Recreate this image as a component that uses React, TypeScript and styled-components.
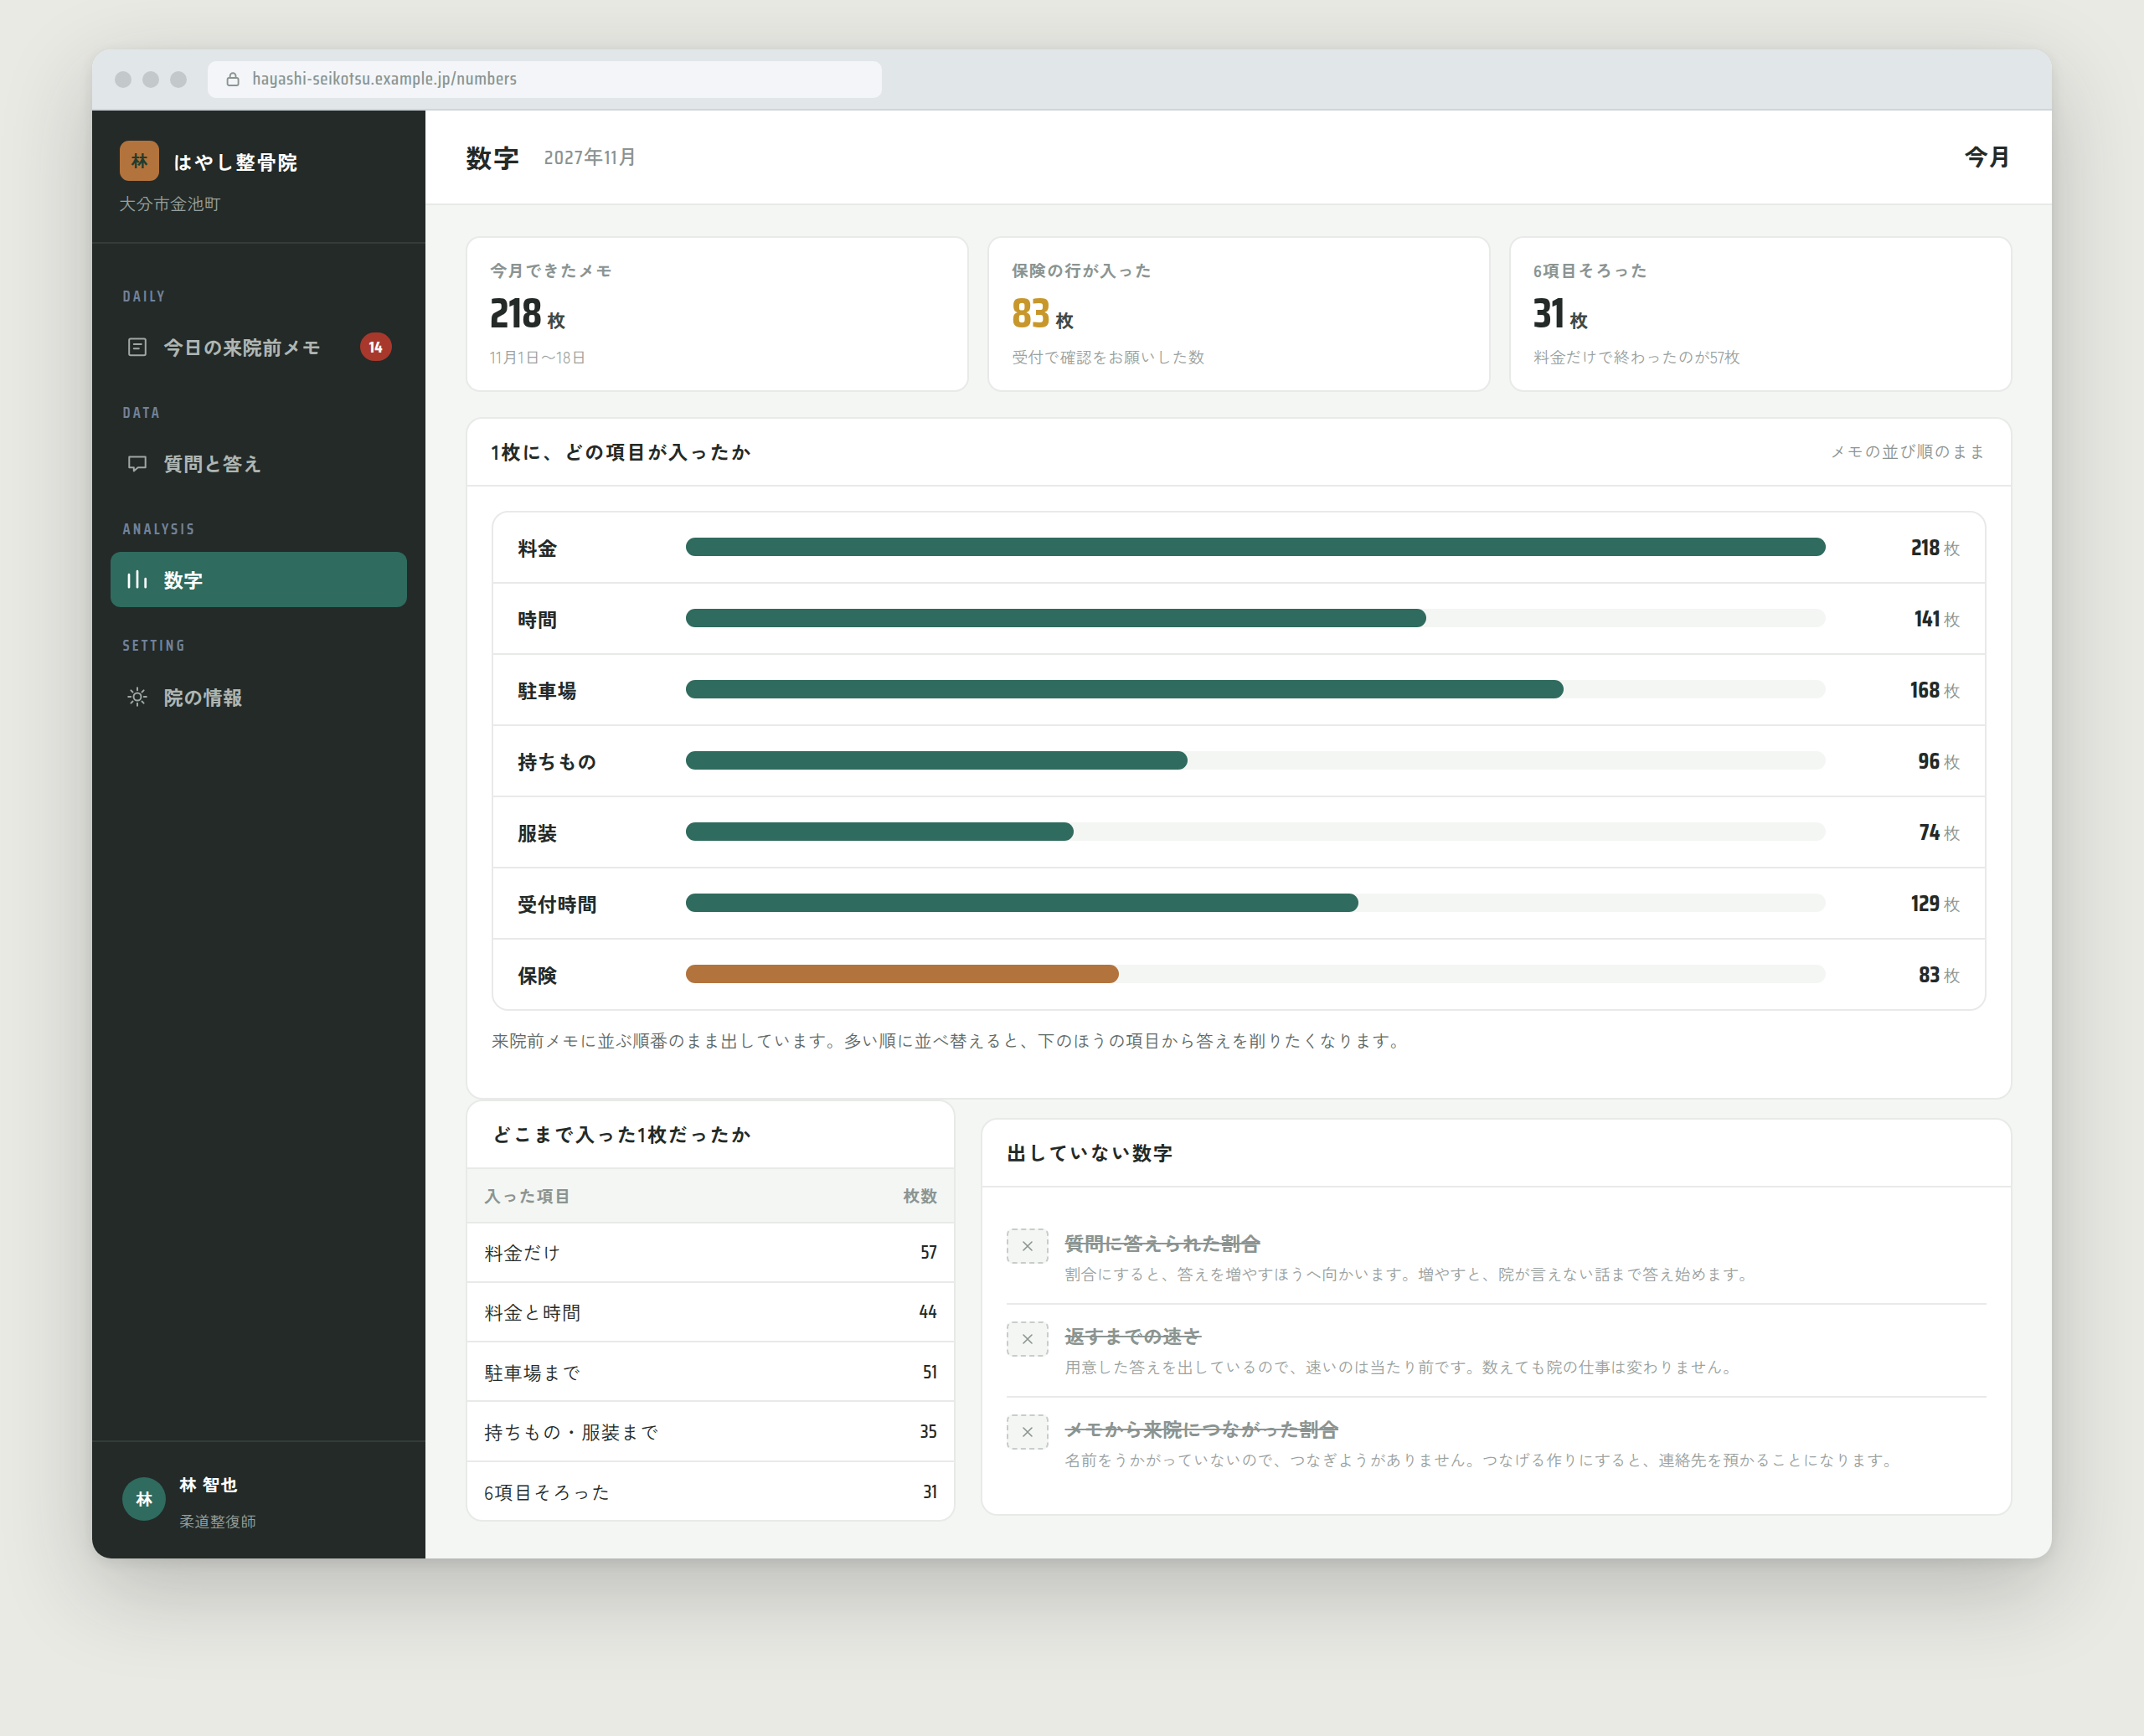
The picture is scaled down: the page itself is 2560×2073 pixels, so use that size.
import React from 'react';
import styled, { createGlobalStyle } from 'styled-components';

const jp = '"Zen Kaku Gothic New", "Noto Sans CJK JP", sans-serif';
const num = '"Saira Condensed", "Roboto Condensed", "Zen Kaku Gothic New", "Noto Sans CJK JP", sans-serif';

const c = {
  ink: '#232a28',
  green: '#2f6b5e',
  copper: '#b3733c',
  gold: '#c8972b',
  red: '#a8382c',
  line: '#e8eae8',
  ground: '#f4f6f4',
  mute: '#8b9491',
  faint: '#9aa19e',
};

const Global = createGlobalStyle`
  *, *::before, *::after { box-sizing: border-box; }
  body { margin: 0; background: #e9eae4; font-family: ${jp}; color: ${c.ink}; }
  h1, h2, p, ul { margin: 0; padding: 0; }
`;

const Page = styled.div`
  height: 2073px;
  padding: 59px 110px 0;
  overflow: hidden;
`;

const Window = styled.div`
  height: 1802px;
  display: flex;
  flex-direction: column;
  border-radius: 23px;
  overflow: hidden;
  background: ${c.ground};
  box-shadow: 0 36px 108px rgba(32, 33, 36, 0.24), 0 4px 16px rgba(32, 35, 36, 0.1);
`;

const Chrome = styled.div`
  flex: none;
  height: 73px;
  display: flex;
  align-items: center;
  padding: 0 27px;
  background: #e1e6e9;
  border-bottom: 2px solid #cfd5d8;
`;

const Dots = styled.div`
  display: flex;
  gap: 13px;
  margin-right: 25px;
`;

const Dot = styled.span`
  width: 20px;
  height: 20px;
  border-radius: 50%;
  background: #c3c8cb;
`;

const Address = styled.div`
  width: 805px;
  height: 44px;
  display: flex;
  align-items: center;
  gap: 14.5px;
  padding-left: 22px;
  border-radius: 10px;
  background: #f3f5f8;
  color: ${c.mute};
  font: 500 21.67px/42px ${num};
  letter-spacing: 0.64px;
`;

const Url = styled.span`
  padding-bottom: 2px;
`;

const Body = styled.div`
  flex: 1;
  min-height: 0;
  display: flex;
`;

const Sidebar = styled.aside`
  width: 398px;
  flex: none;
  display: flex;
  flex-direction: column;
  background: ${c.ink};
`;

const Brand = styled.div`
  height: 159px;
  padding: 36px 32.5px 0;
  border-bottom: 2px solid #343c3a;
`;

const BrandRow = styled.div`
  display: flex;
  align-items: center;
  gap: 16.5px;
`;

const BrandMark = styled.span`
  width: 47.5px;
  height: 48px;
  display: grid;
  place-items: center;
  border-radius: 11px;
  background: ${c.copper};
  color: #1f3d30;
  font: 700 20px/24px ${jp};
`;

const BrandName = styled.span`
  padding-top: 2px;
  color: #fff;
  font: 700 23.33px/30px ${jp};
  letter-spacing: 1.65px;
`;

const BrandPlace = styled.p`
  margin-top: 13px;
  color: #98a19e;
  font: 400 20px/28px ${jp};
  letter-spacing: 0.25px;
`;

const Nav = styled.nav`
  flex: 1;
  padding: 48.5px 22px 0;
`;

const NavLabel = styled.p`
  height: 27px;
  margin-bottom: 14.5px;
  padding-left: 14.5px;
  color: #72829a;
  font: 600 18.33px/27px ${num};
  letter-spacing: 3.2px;
`;

const NavItem = styled.div<{ $active?: boolean }>`
  height: 66px;
  margin-bottom: 31.7px;
  display: flex;
  align-items: center;
  padding: 0 18px;
  border-radius: 12px;
  background: ${(p) => (p.$active ? c.green : 'transparent')};
  color: ${(p) => (p.$active ? '#fff' : '#aeb6b3')};
  font: 700 23.33px/34px ${jp};
  letter-spacing: 0.2px;

  svg {
    margin-right: 17.5px;
    opacity: ${(p) => (p.$active ? 1 : 0.9)};
  }
`;

const Badge = styled.span`
  height: 34px;
  width: 38.5px;
  margin-left: auto;
  border-radius: 17px;
  background: ${c.red};
  color: #fff;
  text-align: center;
  font: 700 20px/34px ${num};
`;

const Account = styled.div`
  height: 141px;
  display: flex;
  gap: 16px;
  padding: 42px 36px 0;
  border-top: 2px solid #343c3a;
`;

const Avatar = styled.span`
  width: 52px;
  height: 52px;
  display: grid;
  place-items: center;
  border-radius: 50%;
  background: ${c.green};
  color: #fff;
  font: 700 20px/26px ${jp};
`;

const Person = styled.div`
  margin-top: -6px;
`;

const PersonName = styled.p`
  color: #fff;
  font: 700 20.83px/28px ${jp};
  letter-spacing: 0.6px;
`;

const PersonRole = styled.p`
  margin-top: 16.5px;
  color: #98a19e;
  font: 400 18.33px/26px ${jp};
`;

const Main = styled.main`
  flex: 1;
  min-width: 0;
`;

const TopBar = styled.header`
  height: 113px;
  display: flex;
  align-items: center;
  padding: 0 47.5px 0 48px;
  background: #fff;
  border-bottom: 2px solid ${c.line};
`;

const PageTitle = styled.h1`
  font: 700 31.2px/40px ${jp};
  letter-spacing: 1.6px;
`;

const Period = styled.span`
  margin-left: 28.5px;
  color: ${c.mute};
  font: 500 23.33px/30px ${num};
  letter-spacing: 1.4px;
`;

const Scope = styled.span`
  margin-left: auto;
  padding-bottom: 3px;
  font: 700 27.8px/36px ${jp};
  letter-spacing: 0.6px;
`;

const Content = styled.div`
  padding: 37px 47.5px 0 48px;
`;

const Cards = styled.div`
  display: grid;
  grid-template-columns: repeat(3, 1fr);
  gap: 22.5px;
`;

const Card = styled.section`
  height: 186px;
  padding: 25px 27px 0;
  border: 2px solid ${c.line};
  border-radius: 17px;
  background: #fff;
`;

const CardLabel = styled.p`
  color: ${c.mute};
  font: 700 20px/28px ${jp};
  letter-spacing: 1px;
`;

const CardValue = styled.p<{ $tone: string }>`
  height: 50px;
  margin: 12px 0 13px;
  color: ${(p) => p.$tone};
  font: 700 50px/50px ${num};
`;

const CardUnit = styled.span`
  margin-left: 6px;
  color: #3f4a46;
  font: 700 22px/30px ${jp};
`;

const CardNote = styled.p`
  color: ${c.faint};
  font: 400 19.17px/28px ${jp};
`;

const Panel = styled.section`
  border: 2px solid ${c.line};
  border-radius: 20px;
  background: #fff;
  overflow: hidden;
`;

const FieldPanel = styled(Panel)`
  height: 815px;
  margin-top: 30px;
`;

const PanelHead = styled.header`
  height: 81px;
  display: flex;
  align-items: center;
  justify-content: space-between;
  padding: 0 29px 2px;
  border-bottom: 2px solid ${c.line};
`;

const PanelTitle = styled.h2`
  font: 700 23.33px/34px ${jp};
  letter-spacing: 1.63px;
`;

const PanelNote = styled.span`
  color: ${c.mute};
  font: 400 20px/28px ${jp};
  letter-spacing: 0.75px;
`;

const PanelBody = styled.div`
  padding: 28.5px 29px;
`;

const Bars = styled.ul`
  list-style: none;
  border: 2px solid ${c.line};
  border-radius: 20px;
`;

const BarRow = styled.li`
  height: 85.1px;
  display: grid;
  grid-template-columns: 201px 1360.5px 1fr;
  align-items: center;
  padding: 0 29px;
  border-bottom: 2px solid ${c.line};

  &:last-child { height: 83.1px; border-bottom: 0; }
`;

const BarName = styled.span`
  padding-top: 1.5px;
  font: 700 23.33px/34px ${jp};
  letter-spacing: 0.4px;
`;

const Track = styled.span`
  height: 22px;
  margin-top: -1px;
  border-radius: 11px;
  background: ${c.ground};
`;

const Fill = styled.span<{ $color: string }>`
  display: block;
  height: 22px;
  border-radius: 11px;
  background: ${(p) => p.$color};
`;

const BarValue = styled.span`
  padding-top: 1.5px;
  text-align: right;
  font: 700 27px/34px ${num};
  letter-spacing: 0.2px;
`;

const BarUnit = styled.span`
  margin-left: 4px;
  color: ${c.mute};
  font: 400 20px/28px ${jp};
  letter-spacing: 0;
`;

const Footnote = styled.p`
  margin-top: 19px;
  color: #606966;
  font: 400 20.83px/32px ${jp};
  letter-spacing: 0.2px;
`;

const Lower = styled.div`
  display: flex;
  align-items: flex-start;
  gap: 30px;
`;

const DepthPanel = styled(Panel)`
  width: 585px;
  height: 504px;
  flex: none;
`;

const AbsentPanel = styled(Panel)`
  flex: 1;
  height: 475px;
  margin-top: 22px;
`;

const TableHead = styled.div`
  height: 64.5px;
  display: flex;
  align-items: center;
  justify-content: space-between;
  padding: 2px 19px 0 20px;
  border-bottom: 2px solid ${c.line};
  background: ${c.ground};
  color: ${c.mute};
  font: 700 20px/28px ${jp};
  letter-spacing: 0.9px;
`;

const TableRow = styled.div`
  height: 71.25px;
  display: flex;
  align-items: center;
  justify-content: space-between;
  padding: 0 20px;
  border-bottom: 2px solid ${c.line};
  font: 400 22.5px/34px ${jp};
  letter-spacing: 0.78px;

  &:last-child { border-bottom: 0; }
`;

const TableCount = styled.span`
  font: 500 22.5px/34px ${num};
  letter-spacing: 0.2px;
`;

const Absent = styled.ul`
  list-style: none;
  padding: 28.5px 29px 0;
`;

const AbsentRow = styled.li`
  height: 111.4px;
  display: flex;
  gap: 20px;
  padding-top: 20px;
  border-bottom: 2px solid ${c.line};

  &:last-child { border-bottom: 0; }
`;

const Cross = styled.span`
  width: 49.5px;
  height: 42px;
  flex: none;
  display: grid;
  place-items: center;
  border: 2px dashed #c8cdca;
  border-radius: 7px;
  background: ${c.ground};
  color: ${c.mute};
`;

const AbsentTitle = styled.p`
  color: ${c.mute};
  font: 700 23.33px/34px ${jp};
  text-decoration: line-through;
`;

const AbsentNote = styled.p`
  margin-top: 5px;
  color: ${c.faint};
  font: 400 19.17px/30px ${jp};
`;

const Glyph = ({ size = 28, width = 2, children }: { size?: number; width?: number; children: React.ReactNode }) => (
  <svg width={size} height={size} viewBox={`0 0 ${size} ${size}`} fill="none" stroke="currentColor"
    strokeWidth={width} strokeLinecap="round" strokeLinejoin="round">{children}</svg>
);

const MemoIcon = () => (
  <Glyph><rect x="4.2" y="4.4" width="19.6" height="19.8" rx="1.6" /><path d="M9.8 10.9h9M9.8 16.2h6" /></Glyph>
);
const TalkIcon = () => (
  <Glyph><path d="M4.3 6.6h19.4v12.6h-9l-4.9 4.2v-4.2H4.3z" /></Glyph>
);
const BarsIcon = () => (
  <Glyph width={2.7}><path d="M4 8.2v15M14 4.2v19M23.7 13.2v10" /></Glyph>
);
const SunIcon = () => (
  <Glyph>
    <circle cx="14" cy="14" r="4.5" />
    <path d="M14 3.2v3M14 21.8v3M3.2 14h3M21.8 14h3M6.4 6.4l2.1 2.1M19.5 19.5l2.1 2.1M6.4 21.6l2.1-2.1M19.5 8.5l2.1-2.1" />
  </Glyph>
);
const LockIcon = () => (
  <Glyph size={17} width={1.9}><rect x="1.6" y="7" width="13" height="9" rx="2" /><path d="M4.7 7V4.6a3.4 3.4 0 0 1 6.8 0V7" /></Glyph>
);
const CrossIcon = () => (
  <Glyph size={12} width={1.6}><path d="M1 1l10 10M11 1L1 11" /></Glyph>
);

const nav = [
  { label: 'DAILY', name: '今日の来院前メモ', icon: <MemoIcon />, badge: 14 },
  { label: 'DATA', name: '質問と答え', icon: <TalkIcon /> },
  { label: 'ANALYSIS', name: '数字', icon: <BarsIcon />, active: true },
  { label: 'SETTING', name: '院の情報', icon: <SunIcon /> },
];

const cards = [
  { label: '今月できたメモ', value: 218, note: '11月1日〜18日', tone: c.ink },
  { label: '保険の行が入った', value: 83, note: '受付で確認をお願いした数', tone: c.gold },
  { label: '6項目そろった', value: 31, note: '料金だけで終わったのが57枚', tone: c.ink },
];

const fields = [
  { name: '料金', count: 218, color: c.green },
  { name: '時間', count: 141, color: c.green },
  { name: '駐車場', count: 168, color: c.green },
  { name: '持ちもの', count: 96, color: c.green },
  { name: '服装', count: 74, color: c.green },
  { name: '受付時間', count: 129, color: c.green },
  { name: '保険', count: 83, color: c.copper },
];

const depth: [string, number][] = [
  ['料金だけ', 57],
  ['料金と時間', 44],
  ['駐車場まで', 51],
  ['持ちもの・服装まで', 35],
  ['6項目そろった', 31],
];

const absent = [
  ['質問に答えられた割合', '割合にすると、答えを増やすほうへ向かいます。増やすと、院が言えない話まで答え始めます。'],
  ['返すまでの速さ', '用意した答えを出しているので、速いのは当たり前です。数えても院の仕事は変わりません。'],
  ['メモから来院につながった割合', '名前をうかがっていないので、つなぎようがありません。つなげる作りにすると、連絡先を預かることになります。'],
];

export default function App() {
  return (
    <Page>
      <Global />
      <Window>
        <Chrome>
          <Dots><Dot /><Dot /><Dot /></Dots>
          <Address><LockIcon /><Url>hayashi-seikotsu.example.jp/numbers</Url></Address>
        </Chrome>
        <Body>
          <Sidebar>
            <Brand>
              <BrandRow><BrandMark>林</BrandMark><BrandName>はやし整骨院</BrandName></BrandRow>
              <BrandPlace>大分市金池町</BrandPlace>
            </Brand>
            <Nav>
              {nav.map((n) => (
                <React.Fragment key={n.label}>
                  <NavLabel>{n.label}</NavLabel>
                  <NavItem $active={n.active}>
                    {n.icon}
                    <span>{n.name}</span>
                    {n.badge && <Badge>{n.badge}</Badge>}
                  </NavItem>
                </React.Fragment>
              ))}
            </Nav>
            <Account>
              <Avatar>林</Avatar>
              <Person><PersonName>林 智也</PersonName><PersonRole>柔道整復師</PersonRole></Person>
            </Account>
          </Sidebar>
          <Main>
            <TopBar>
              <PageTitle>数字</PageTitle>
              <Period>2027年11月</Period>
              <Scope>今月</Scope>
            </TopBar>
            <Content>
              <Cards>
                {cards.map((k) => (
                  <Card key={k.label}>
                    <CardLabel>{k.label}</CardLabel>
                    <CardValue $tone={k.tone}>{k.value}<CardUnit>枚</CardUnit></CardValue>
                    <CardNote>{k.note}</CardNote>
                  </Card>
                ))}
              </Cards>
              <FieldPanel>
                <PanelHead>
                  <PanelTitle>1枚に、どの項目が入ったか</PanelTitle>
                  <PanelNote>メモの並び順のまま</PanelNote>
                </PanelHead>
                <PanelBody>
                  <Bars>
                    {fields.map((f) => (
                      <BarRow key={f.name}>
                        <BarName>{f.name}</BarName>
                        <Track>
                          <Fill $color={f.color} style={{ width: `${Math.round((f.count / 218) * 100)}%` }} />
                        </Track>
                        <BarValue>{f.count}<BarUnit>枚</BarUnit></BarValue>
                      </BarRow>
                    ))}
                  </Bars>
                  <Footnote>来院前メモに並ぶ順番のまま出しています。多い順に並べ替えると、下のほうの項目から答えを削りたくなります。</Footnote>
                </PanelBody>
              </FieldPanel>
              <Lower>
                <DepthPanel>
                  <PanelHead><PanelTitle>どこまで入った1枚だったか</PanelTitle></PanelHead>
                  <TableHead><span>入った項目</span><span>枚数</span></TableHead>
                  {depth.map(([name, count]) => (
                    <TableRow key={name}><span>{name}</span><TableCount>{count}</TableCount></TableRow>
                  ))}
                </DepthPanel>
                <AbsentPanel>
                  <PanelHead><PanelTitle>出していない数字</PanelTitle></PanelHead>
                  <Absent>
                    {absent.map(([title, note]) => (
                      <AbsentRow key={title}>
                        <Cross><CrossIcon /></Cross>
                        <div><AbsentTitle>{title}</AbsentTitle><AbsentNote>{note}</AbsentNote></div>
                      </AbsentRow>
                    ))}
                  </Absent>
                </AbsentPanel>
              </Lower>
            </Content>
          </Main>
        </Body>
      </Window>
    </Page>
  );
}
